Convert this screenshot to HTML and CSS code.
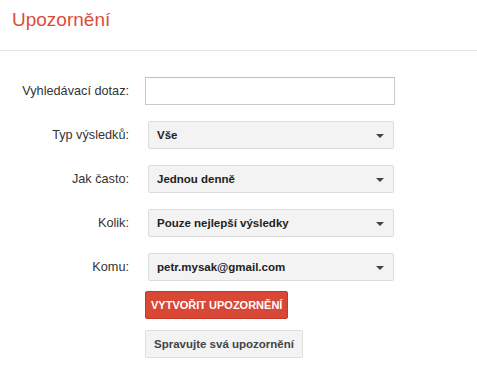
FILE: index.html
```html
<!DOCTYPE html>
<html lang="cs">
<head>
    <meta charset="UTF-8">
    <title>Upozornění</title>
    <link rel="stylesheet" href="styles.css">
</head>
<body>
    <div class="header">
        <h1>Upozornění</h1>
    </div>

    <form class="alert-form">
        <div class="form-row">
            <label for="query">Vyhledávací dotaz:</label>
            <input type="text" id="query" class="text-input">
        </div>
        <div class="form-row">
            <label>Typ výsledků:</label>
            <div class="dropdown">Vše<span class="arrow"></span></div>
        </div>
        <div class="form-row">
            <label>Jak často:</label>
            <div class="dropdown">Jednou denně<span class="arrow"></span></div>
        </div>
        <div class="form-row">
            <label>Kolik:</label>
            <div class="dropdown">Pouze nejlepší výsledky<span class="arrow"></span></div>
        </div>
        <div class="form-row">
            <label>Komu:</label>
            <div class="dropdown">petr.mysak@gmail.com<span class="arrow"></span></div>
        </div>
        <div class="actions">
            <button type="button" class="btn btn-red">Vytvořit upozornění</button>
            <button type="button" class="btn btn-grey">Spravujte svá upozornění</button>
        </div>
    </form>
</body>
</html>
```

FILE: styles.css
```css
body {
    margin: 0;
    font-family: "Liberation Sans", Arial, sans-serif;
    background: #fff;
    color: #222;
}
.header {
    height: 50px;
    border-bottom: 1px solid #e5e5e5;
}
h1 {
    margin: 0;
    padding: 8px 0 0 12px;
    font-size: 19px;
    font-weight: normal;
    line-height: 24px;
    color: #dd4b39;
}
.alert-form {
    padding-top: 26px;
}
.form-row {
    display: grid;
    grid-template-columns: 129px auto;
    column-gap: 16px;
    align-items: center;
    margin-bottom: 16px;
}
.form-row label {
    text-align: right;
    font-size: 12.7px;
    color: #333;
}
.text-input {
    box-sizing: border-box;
    width: 250px;
    height: 28px;
    margin: 0;
    border: 1px solid #c8c8c8;
    border-top-color: #c0c0c0;
    padding: 0 8px;
    font-family: inherit;
}
.dropdown {
    position: relative;
    box-sizing: border-box;
    width: 246px;
    height: 28px;
    margin-left: 3px;
    padding-left: 8px;
    line-height: 26px;
    border: 1px solid #dcdcdc;
    border-radius: 2px;
    background: #f3f3f3;
    font-size: 11.5px;
    font-weight: bold;
    color: #222;
}
.arrow {
    position: absolute;
    right: 9px;
    top: 12px;
    width: 0;
    height: 0;
    border-left: 4px solid transparent;
    border-right: 4px solid transparent;
    border-top: 4px solid #444;
}
.actions {
    display: flex;
    flex-direction: column;
    align-items: flex-start;
    gap: 11px;
    padding-left: 145px;
    margin-top: -6px;
}
.btn {
    height: 28px;
    padding: 0 8px;
    border-radius: 2px;
    font-family: inherit;
    font-size: 11px;
    font-weight: bold;
    white-space: nowrap;
    cursor: pointer;
}
.btn-red {
    padding: 0 5px;
    border: 1px solid #c53727;
    background: #d94836;
    color: #fff;
    text-transform: uppercase;
}
.btn-grey {
    padding: 0 8px;
    border: 1px solid #dcdcdc;
    background: #f3f3f3;
    color: #444;
    font-size: 11.5px;
}
```
